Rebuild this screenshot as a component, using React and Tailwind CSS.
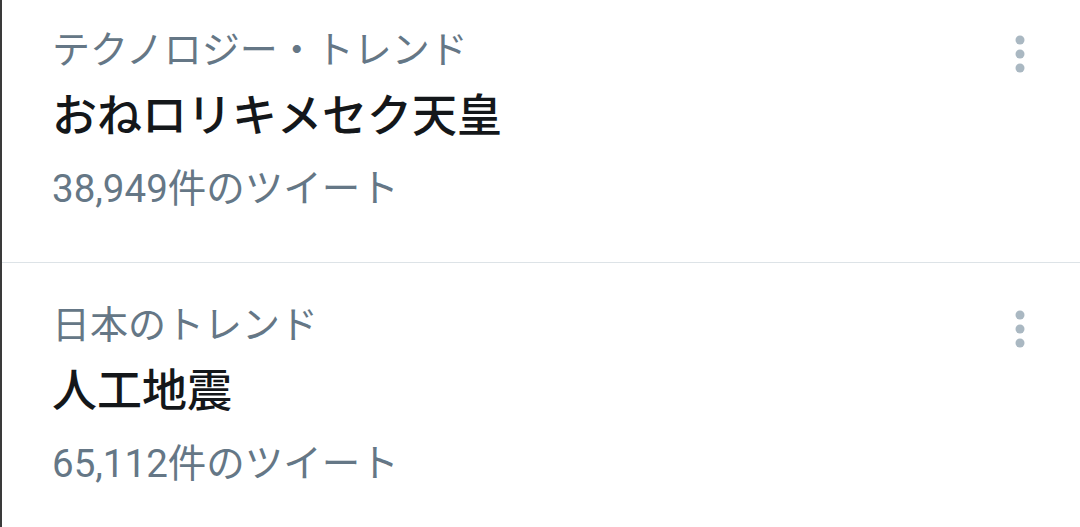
import React from "react";

const FONT = { fontFamily: 'Roboto, "Noto Sans CJK JP", "Noto Sans", sans-serif' };

function Dots() {
  return (
    <svg width="20" height="40" viewBox="0 0 20 40" className="shrink-0">
      <circle cx="10" cy="6" r="4.5" fill="#aab8c2" />
      <circle cx="10" cy="20" r="4.5" fill="#aab8c2" />
      <circle cx="10" cy="34" r="4.5" fill="#aab8c2" />
    </svg>
  );
}

function Trend({ category, title, count }) {
  return (
    <div className="flex justify-between pl-[50px] pr-[50px]">
      <div className="flex flex-col">
        <div className="text-[38px] leading-[52px] text-[#657786]">{category}</div>
        <div className="text-[45px] leading-[82px] font-[500] text-[#14171a]">{title}</div>
        <div className="text-[38.5px] leading-[62px] text-[#657786]">{count}</div>
      </div>
      <div className="mt-[10px]">
        <Dots />
      </div>
    </div>
  );
}

export default function App() {
  return (
    <div className="w-[1080px] h-[527px] overflow-hidden bg-white border-l-2 border-l-[#3a3a3a]" style={FONT}>
      <div className="pt-[24px] pb-[42px]">
        <Trend category="テクノロジー・トレンド" title="おねロリキメセク天皇" count="38,949件のツイート" />
      </div>
      <div className="h-px bg-[#dde3e7]" />
      <div className="pt-[36px]">
        <Trend category="日本のトレンド" title="人工地震" count="65,112件のツイート" />
      </div>
    </div>
  );
}
